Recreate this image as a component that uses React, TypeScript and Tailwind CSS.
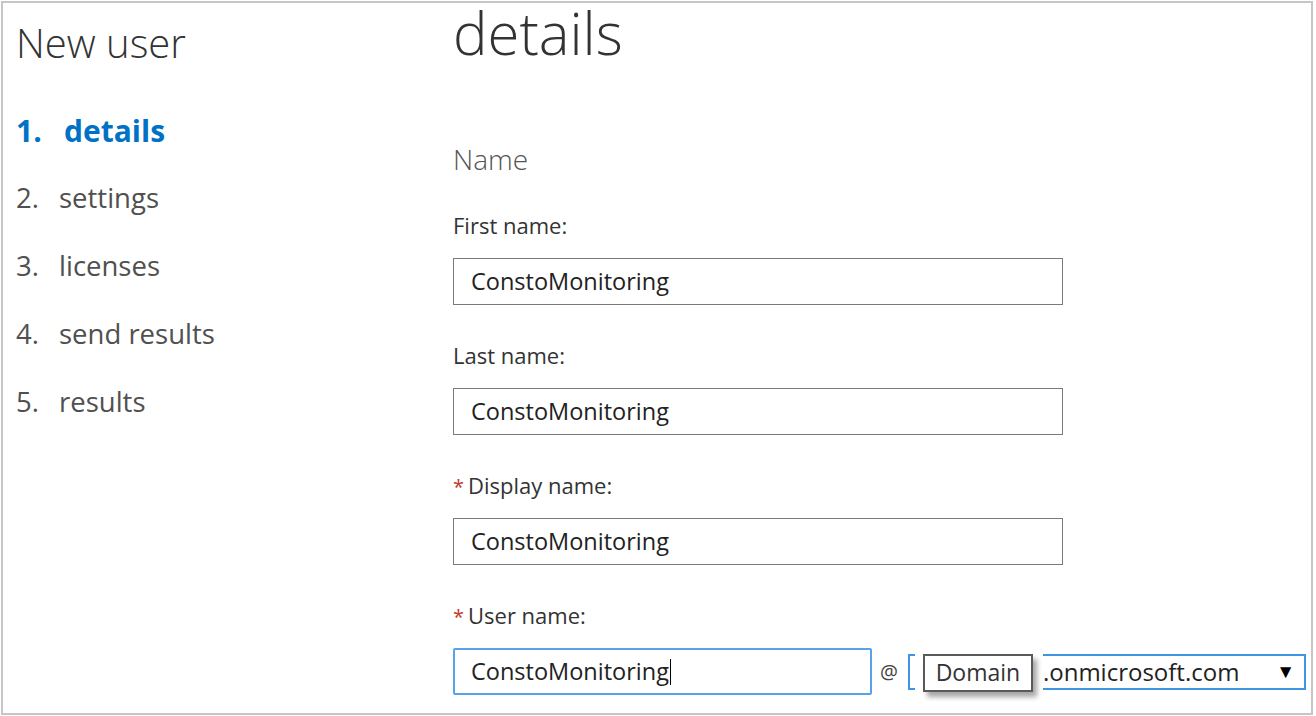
const font = { fontFamily: '"Open Sans", "Noto Sans", "Liberation Sans", sans-serif' };

const steps = [
  { n: "1.", label: "details", active: true },
  { n: "2.", label: "settings" },
  { n: "3.", label: "licenses" },
  { n: "4.", label: "send results" },
  { n: "5.", label: "results" },
];

function Field({
  label,
  required,
  value,
}: {
  label: string;
  required?: boolean;
  value: string;
}) {
  return (
    <div className="mt-[38px] flex flex-col">
      <div className="h-6 text-[22px] leading-6 text-[#333]">
        {required && <span className="mr-1 text-[20px] text-[#c0392b]">*</span>}
        {label}
      </div>
      <div className="mt-[21px] flex h-[47px] w-[610px] items-center border border-[#7a7a7a] pl-[17px] text-[23.5px] text-[#222]">
        {value}
      </div>
    </div>
  );
}

export default function App() {
  return (
    <div className="h-[716px] w-[1316px] bg-white pl-px pt-px" style={font}>
      <div className="flex h-[714px] w-[1312px] border-2 border-[#c6c6c6]">
        {/* left: wizard steps */}
        <div className="w-[450px] shrink-0 pl-[13px]">
          <div className="mt-4 h-12 text-[40px] font-light leading-[48px] text-[#333]">
            New user
          </div>
          <ul className="mt-[29px]">
            {steps.map((s) => (
              <li
                key={s.n}
                className={
                  s.active
                    ? "flex h-[68px] items-center text-[30px] font-bold text-[#0072c6]"
                    : "flex h-[68px] items-center text-[27.5px] text-[#505050]"
                }
              >
                <span className={s.active ? "w-[48px]" : "w-[43px]"}>{s.n}</span>
                <span>{s.label}</span>
              </li>
            ))}
          </ul>
        </div>

        {/* right: form */}
        <div className="flex-1">
          <h1 className="-mt-[2px] h-16 text-[58px] font-light leading-[64px] text-[#333]">
            details
          </h1>
          <div className="mt-[78px] h-8 text-[28px] font-light leading-8 text-[#555]">
            Name
          </div>
          <Field label="First name:" value="ConstoMonitoring" />
          <Field label="Last name:" value="ConstoMonitoring" />
          <Field label="Display name:" required value="ConstoMonitoring" />

          <div className="mt-[38px] flex flex-col">
            <div className="h-6 text-[22px] leading-6 text-[#333]">
              <span className="mr-1 text-[20px] text-[#c0392b]">*</span>
              User name:
            </div>
            <div className="mt-[21px] flex items-center">
              <div className="flex h-[47px] w-[419px] items-center rounded-[2px] border-2 border-[#5aa2e8] pl-4 text-[23.5px] text-[#222]">
                ConstoMonitoring
                <span className="ml-px h-[26px] w-px bg-black" />
              </div>
              <span className="ml-[8px] text-[20px] text-[#444]">@</span>
              <div className="relative ml-[10px] flex h-[36px] w-[398px] items-center border-2 border-[#3f95e2] pl-[133px] pr-[9px] text-[24px] text-[#222]">
                <span className="flex-1">.onmicrosoft.com</span>
                <span className="text-[19px] text-black">▼</span>
                {/* tooltip with its white margin hiding the border */}
                <div className="absolute left-[5px] top-[-2px] h-[36px] w-[128px] bg-white">
                  <div className="ml-2 flex h-[38px] w-[110px] items-center justify-center border-2 border-[#5a5a5a] bg-white text-[23px] text-[#333] shadow-[4px_5px_5px_rgba(0,0,0,0.35)]">
                    Domain
                  </div>
                </div>
              </div>
            </div>
          </div>
        </div>
      </div>
    </div>
  );
}
